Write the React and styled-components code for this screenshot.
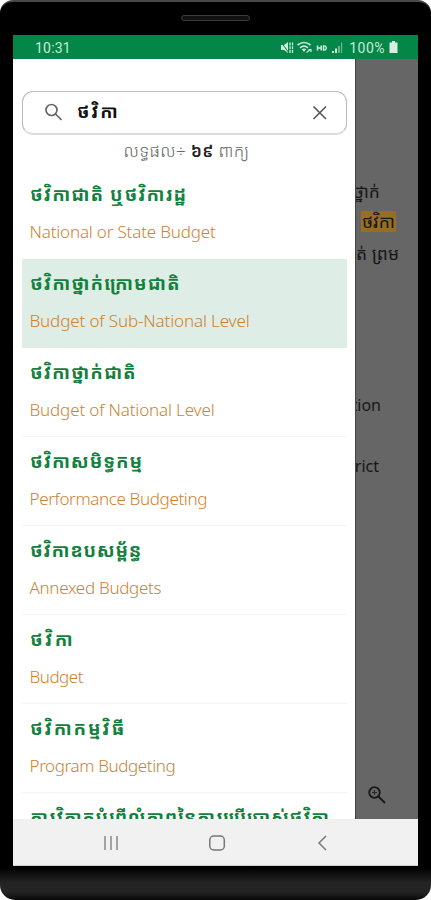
import React from "react";
import styled, { createGlobalStyle } from "styled-components";

const Global = createGlobalStyle`
  * { box-sizing: border-box; }
  html, body { margin: 0; background: #fff; overflow: hidden; }
`;

const khmer = `"Noto Sans Khmer", "Khmer OS", "Noto Serif Khmer", "Noto Sans", sans-serif`;
const latin = `"Noto Sans", "Open Sans", sans-serif`;

const Phone = styled.div`
  width: 431px;
  height: 900px;
  padding: 0 13px;
  border-radius: 13px 13px 15px 15px;
  border-top: 2px solid #484848;
  background: linear-gradient(#000 866px, #0b0b0b 870px, #242424 881px, #242424 890px, #080808 898px);
  display: flex;
  flex-direction: column;
`;
const Top = styled.div`
  height: 33px;
  padding-top: 13px;
  display: flex;
  justify-content: center;
  align-items: flex-start;
`;
const Speaker = styled.div`
  width: 69px;
  height: 6px;
  border: 1px solid #3c3c3c;
  border-radius: 3px;
  background: #111;
`;
const StatusBar = styled.div`
  height: 24px;
  flex: none;
  padding: 1px 20px 0 22px;
  background: #038648;
  color: #c9ecd6;
  display: flex;
  align-items: center;
  font: 400 14px Roboto, sans-serif;
`;
const Clock = styled.span`
  flex: 1;
  letter-spacing: 0.2px;
`;
const Percent = styled.span`
  margin: 0 4px 0 5px;
  letter-spacing: 0.5px;
`;
const Screen = styled.div`
  height: 760px;
  flex: none;
  display: flex;
  background: #666;
  overflow: hidden;
`;
const Drawer = styled.div`
  width: 342px;
  flex: none;
  padding: 32px 8px 0 9px;
  background: #fff;
  overflow: hidden;
`;
const SearchBox = styled.div`
  height: 44px;
  border: 1px solid #bbb;
  border-bottom: 2px solid #ddd;
  border-radius: 11px;
  display: flex;
  align-items: center;
  padding: 0 18px 0 21px;
`;
const Query = styled.span`
  flex: 1;
  margin: -4px 0 0 14px;
  font: 700 18px/30px ${khmer};
  letter-spacing: 1.8px;
  color: #111;
`;
const Count = styled.div`
  height: 46px;
  padding: 2px 0 0 4px;
  text-align: center;
  font: 300 17px/28px ${khmer};
  letter-spacing: 0.3px;
  color: #666;
  b { font-weight: 600; color: #222; }
`;
const List = styled.div`
  display: flex;
  flex-direction: column;
`;
const Row = styled.div`
  height: 89px;
  flex: none;
  margin-top: ${(p) => (p.$first ? "-11px" : "0")};
  padding: 8px 8px 0;
  border-bottom: 1px solid ${(p) => (p.$selected ? "#deede5" : p.$first ? "#fff" : "#f4f4f4")};
  background: ${(p) => (p.$selected ? "#deede5" : "transparent")};
  white-space: nowrap;
`;
const Term = styled.div`
  height: 32px;
  font: 700 18.5px/32px ${khmer};
  letter-spacing: ${(p) => p.$tracking}px;
  color: #12813d;
`;
const Meaning = styled.div`
  margin: 9px 0 0 -0.5px;
  font: 300 17px/26px ${latin};
  letter-spacing: ${(p) => p.$tracking}px;
  color: #cd8230;
`;
const Backdrop = styled.div`
  flex: 1;
  min-width: 0;
  border-left: 1px solid #444;
  display: flex;
  flex-direction: column;
  overflow: hidden;
  padding-top: 117px;
  color: #171717;
  white-space: nowrap;
`;
const KhmerLine = styled.div`
  width: ${(p) => p.$width}px;
  height: 31px;
  display: flex;
  justify-content: flex-end;
  font: 400 17.5px/31px ${khmer};
`;
const Mark = styled.span`
  height: 21px;
  margin-top: 4px;
  padding: 0 1px;
  line-height: 21px;
  background: #986e22;
`;
const EnglishText = styled.div`
  margin-top: 124px;
`;
const EnglishLine = styled.div`
  width: ${(p) => p.$width}px;
  height: 61px;
  display: flex;
  justify-content: flex-end;
  font: 400 16px/24px ${latin};
`;
const ZoomButton = styled.div`
  margin: auto 0 14px 11px;
  height: 20px;
`;
const NavBar = styled.div`
  height: 47px;
  flex: none;
  background: #f1f1f1;
  border-bottom: 1px solid #ccc;
  display: flex;
  align-items: center;
  justify-content: space-between;
  padding: 2px 87px 0 87px;
`;

const rows = [
  { term: "ថវិកាជាតិ ឬថវិការដ្ឋ", termTracking: 1.05, meaning: "National or State Budget", tracking: -0.17 },
  { term: "ថវិកាថ្នាក់ក្រោមជាតិ", termTracking: 1.05, meaning: "Budget of Sub-National Level", tracking: -0.13 },
  { term: "ថវិកាថ្នាក់ជាតិ", termTracking: 1, meaning: "Budget of National Level", tracking: -0.15 },
  { term: "ថវិកាសមិទ្ធកម្ម", termTracking: 0.9, meaning: "Performance Budgeting", tracking: -0.36 },
  { term: "ថវិកាឧបសម្ព័ន្ធ", termTracking: 0.7, meaning: "Annexed Budgets", tracking: -0.3 },
  { term: "ថវិកា", termTracking: 2.3, meaning: "Budget", tracking: -0.5 },
  { term: "ថវិកាកម្មវិធី", termTracking: 1.8, meaning: "Program Budgeting", tracking: -0.38 },
  { term: "ការវិភាគបំពើលំភាពនៃការប្រើប្រាស់ថវិកា", termTracking: 0.65, meaning: "", tracking: 0 },
];

const StatusIcons = () => (
  <svg width="64" height="14" viewBox="0 0 64 14" fill="#c9ecd6">
    <path d="M1 4h3l4-3v11L4 9H1z" />
    <path d="M1 1l8 11" stroke="#038648" strokeWidth="1" />
    <path d="M10 1.500v10.500M12.500 1.500v10.500" stroke="#c9ecd6" strokeWidth="1.300" strokeDasharray="3 .8" />
    <path d="M17.500 4Q24 -1 30.500 4M20 6.800Q24 3.500 28 6.800" fill="none" stroke="#c9ecd6" strokeWidth="1.700" />
    <path d="M21.800 8.300Q24 6.800 26.200 8.300L24 11z" />
    <path d="M26.500 11.500l4-3M28.500 8.500h2.500v2.500" fill="none" stroke="#c9ecd6" strokeWidth="1.200" />
    <path d="M37.500 4.500v5M37.500 7H41M41.200 4.500v5M43.500 5h1.500q2.800 2 0 4h-1.500z" fill="none" stroke="#c9ecd6" strokeWidth="1.500" />
    <path d="M52 12v-2h2v2zM55 12V7.500h2V12z" />
    <path d="M58 12V5h2v7zM61 12V1.500h1.200V12z" opacity=".5" />
  </svg>
);

export default function App() {
  return (
    <>
      <Global />
      <Phone>
        <Top><Speaker /></Top>
        <StatusBar>
          <Clock>10:31</Clock>
          <StatusIcons />
          <Percent>100%</Percent>
          <svg width="9" height="13" viewBox="0 0 9 13"><path d="M3 0h3v1.500h2.500V12h-8V1.500H3z" fill="#d5f0df" /></svg>
        </StatusBar>
        <Screen>
          <Drawer>
            <SearchBox>
              <svg width="19" height="19" viewBox="0 0 19 19" fill="none" stroke="#666" strokeWidth="1.700">
                <circle cx="7.500" cy="7" r="5.500" /><path d="M11.500 11l6 6" />
              </svg>
              <Query>ថវិកា</Query>
              <svg width="16" height="16" viewBox="0 0 16 16" stroke="#555" strokeWidth="1.600"><path d="M1.500 1.500l12.500 12.500M14 1.500L1.500 14" /></svg>
            </SearchBox>
            <Count>លទ្ធផល÷ <b>៦៩</b> ពាក្យ</Count>
            <List>
              {rows.map((row, i) => (
                <Row key={i} $first={i === 0} $selected={i === 1}>
                  <Term $tracking={row.termTracking}>{row.term}</Term>
                  <Meaning $tracking={row.tracking}>{row.meaning}</Meaning>
                </Row>
              ))}
            </List>
          </Drawer>
          <Backdrop>
            <KhmerLine $width={24}>ថ្នាក់</KhmerLine>
            <KhmerLine $width={40}><Mark>ថវិកា</Mark></KhmerLine>
            <KhmerLine $width={43}>ត់ ព្រម</KhmerLine>
            <EnglishText>
              <EnglishLine $width={25}>tion</EnglishLine>
              <EnglishLine $width={23}>district</EnglishLine>
            </EnglishText>
            <ZoomButton>
              <svg width="20" height="20" viewBox="0 0 20 20" fill="none" stroke="#181818" strokeWidth="1.800">
                <circle cx="7.500" cy="7.500" r="5.300" /><path d="M11.500 11.500l6.500 6.500" /><path d="M7.500 5v5M5 7.500h5" strokeWidth=".8" />
              </svg>
            </ZoomButton>
          </Backdrop>
        </Screen>
        <NavBar>
          <svg width="22" height="18" viewBox="0 0 22 18" stroke="#888" strokeWidth="1.500"><path d="M5 2v14M11 2v14M17 2v14" /></svg>
          <svg width="18" height="18" viewBox="0 0 18 18" fill="none" stroke="#777" strokeWidth="1.500"><rect x="0.800" y="2" width="14.500" height="14" rx="4" /></svg>
          <svg width="18" height="18" viewBox="0 0 18 18" fill="none" stroke="#777" strokeWidth="1.500"><path d="M13 2L6 9l7 7" /></svg>
        </NavBar>
      </Phone>
    </>
  );
}
